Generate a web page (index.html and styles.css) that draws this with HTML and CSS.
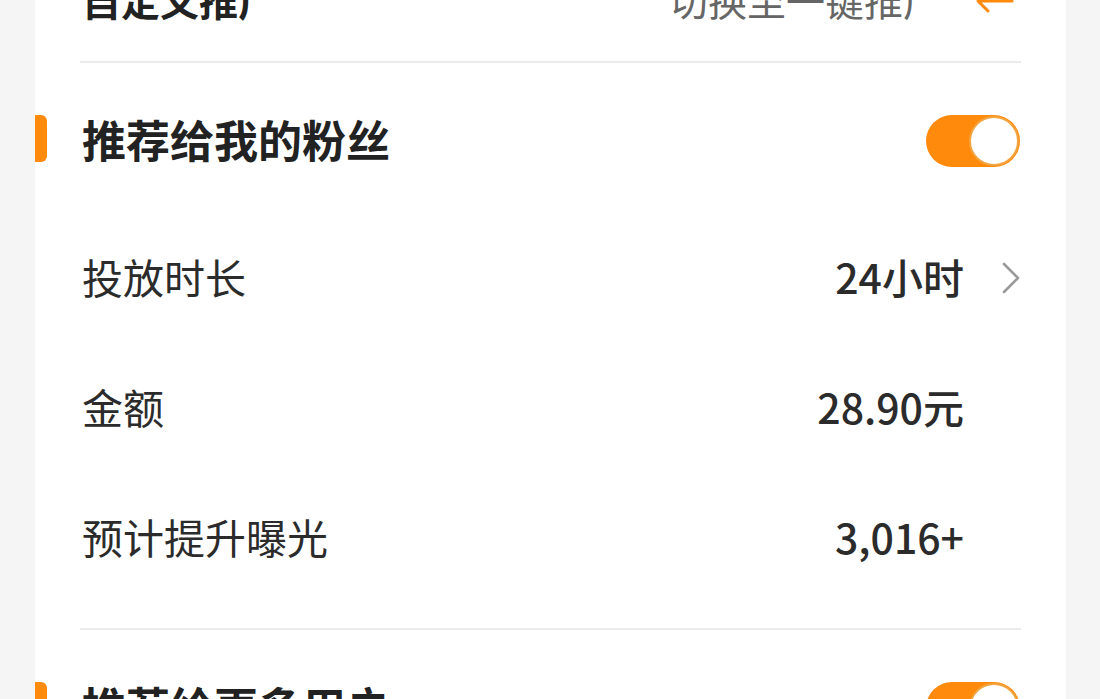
FILE: index.html
```html
<!DOCTYPE html>
<html lang="zh-CN">
<head>
<meta charset="utf-8">
<title>推广设置</title>
<link rel="stylesheet" href="styles.css">
</head>
<body>
<main class="card">
  <div class="header">
    <span class="header-title">自定义推广</span>
    <span class="header-switch">
      <span class="switch-text">切换至一键推广</span>
      <svg class="swap-icon" width="40" height="40" viewBox="0 0 40 40" aria-hidden="true">
        <path d="M3 12 H37 L27 2" fill="none" stroke="#ff8a0c" stroke-width="3" stroke-linecap="round" stroke-linejoin="round"/>
        <path d="M37 28 H3 L13 38" fill="none" stroke="#ff8a0c" stroke-width="3" stroke-linecap="round" stroke-linejoin="round"/>
      </svg>
    </span>
  </div>
  <div class="divider"></div>

  <section class="section">
    <div class="section-head">
      <span class="marker"></span>
      <span class="section-title">推荐给我的粉丝</span>
      <span class="toggle on"><span class="knob"></span></span>
    </div>
    <div class="row">
      <span class="label">投放时长</span>
      <span class="value">24小时</span>
      <span class="chev-slot">
        <svg class="chev" width="20" height="32" viewBox="0 0 20 32" aria-hidden="true">
          <path d="M3 2 L17 16 L3 30" fill="none" stroke="#9a9a9a" stroke-width="2.6" stroke-linecap="round" stroke-linejoin="round"/>
        </svg>
      </span>
    </div>
    <div class="row">
      <span class="label">金额</span>
      <span class="value">28.90元</span>
      <span class="chev-slot"></span>
    </div>
    <div class="row">
      <span class="label">预计提升曝光</span>
      <span class="value">3,016+</span>
      <span class="chev-slot"></span>
    </div>
  </section>
  <div class="divider divider-low"></div>

  <section class="section">
    <div class="section-head">
      <span class="marker"></span>
      <span class="section-title">推荐给更多用户</span>
      <span class="toggle on"><span class="knob"></span></span>
    </div>
    <div class="row">
      <span class="label">投放时长</span>
      <span class="value">24小时</span>
      <span class="chev-slot"></span>
    </div>
  </section>
</main>
</body>
</html>
```

FILE: styles.css
```css
html, body {
  margin: 0;
  padding: 0;
  height: 100%;
  overflow: hidden;
  background: #f5f5f5;
}

body {
  font-family: "Noto Sans CJK SC", "Noto Sans", sans-serif;
  color: #222;
}

.card {
  margin-left: 35px;
  width: 1031px;
  min-height: 100vh;
  background: #fff;
  padding: 0 45px;
  box-sizing: border-box;
}

.header {
  display: flex;
  align-items: center;
  justify-content: space-between;
  height: 60px;
  margin-top: -31px;
}

.header-title {
  font-size: 39px;
  font-weight: 700;
  line-height: 1;
  color: #222;
  margin-left: 2px;
}

.header-switch {
  display: flex;
  align-items: center;
  gap: 33px;
  margin-right: 6px;
}

.switch-text {
  font-size: 39px;
  line-height: 1;
  color: #666;
}

.swap-icon {
  display: block;
  margin-top: -13px;
}

.divider {
  height: 2px;
  background: #ebebeb;
  margin-top: 32px;
}

.divider-low {
  margin-top: 25px;
}

.section-head {
  display: flex;
  align-items: center;
  height: 52px;
  margin-top: 52px;
  margin-bottom: 46px;
}

.marker {
  width: 12px;
  height: 47px;
  margin-left: -45px;
  margin-right: 35px;
  margin-bottom: 5px;
  background: #ff8a0c;
  border-radius: 0 6px 6px 0;
}

.section-title {
  flex: 1;
  font-size: 44px;
  font-weight: 700;
  line-height: 1;
  color: #222;
  padding-bottom: 5px;
}

.toggle {
  position: relative;
  width: 94px;
  height: 52px;
  border-radius: 26px;
  background: #ff8a0c;
  margin-right: 1px;
}

.knob {
  position: absolute;
  right: 1px;
  top: 1px;
  width: 46px;
  height: 46px;
  border-radius: 50%;
  background: #fff;
  border: 2px solid #f1a440;
}

.row {
  display: flex;
  align-items: center;
  height: 130px;
}

.label {
  flex: 1;
  font-size: 41px;
  line-height: 1;
  color: #2b2b2b;
  padding-left: 2px;
  padding-bottom: 4px;
}

.value {
  font-size: 41px;
  font-weight: 500;
  line-height: 1;
  color: #2b2b2b;
  padding-bottom: 4px;
}

.chev-slot {
  width: 57px;
  display: flex;
  justify-content: flex-end;
}

.chev {
  display: block;
}
```
